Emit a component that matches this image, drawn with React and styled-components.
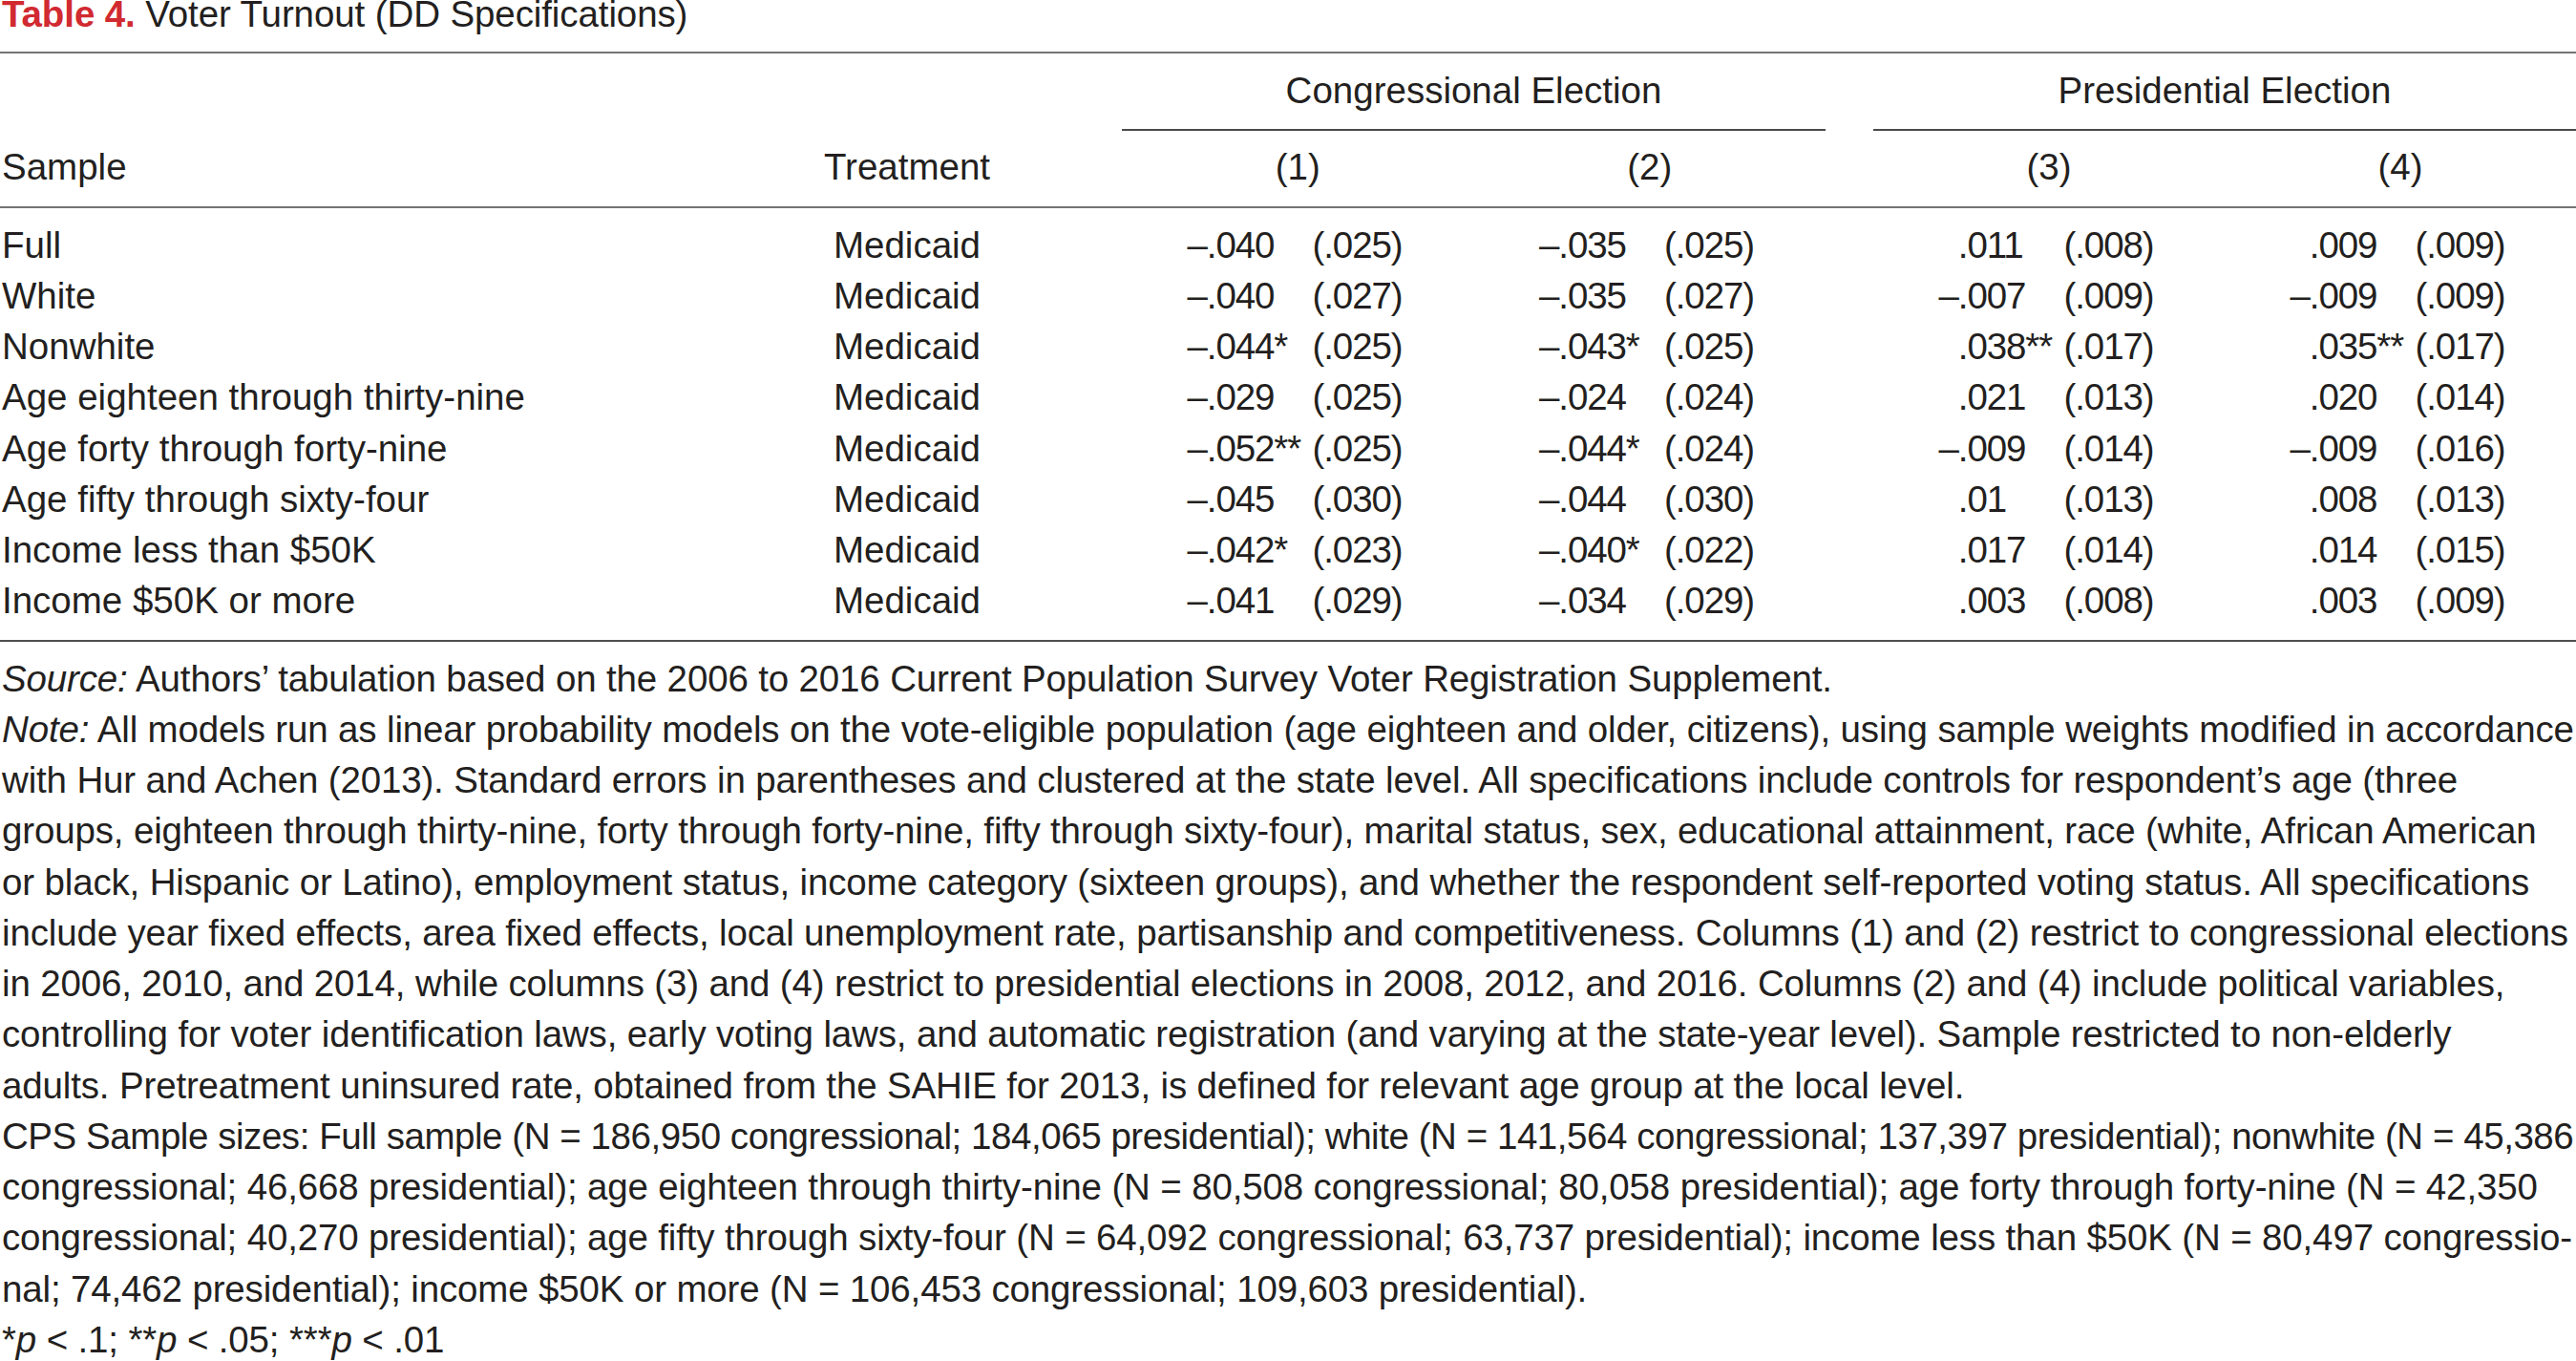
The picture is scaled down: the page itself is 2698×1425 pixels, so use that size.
import React, { useLayoutEffect, useRef, useState } from "react";
import styled, { createGlobalStyle, css } from "styled-components";

const GlobalStyle = createGlobalStyle`
  html, body {
    margin: 0;
    padding: 0;
    background: #ffffff;
    overflow: hidden;
  }
  body {
    font-family: "Liberation Sans", Arial, sans-serif;
    color: #231f20;
    font-size: 38.5px;
    line-height: 53.25px;
  }
`;

const columns = css`
  display: grid;
  grid-template-columns: 860px 180px 135px 368.5px 368.5px 50px 368px 368px;
`;

const Page = styled.div`
  width: 2698px;
`;

const Caption = styled.div`
  margin: -12px 0 12.75px;
  padding-left: 2px;
  white-space: nowrap;
  letter-spacing: -0.1px;
`;

const Label = styled.span`
  color: #d12a31;
  font-weight: 700;
`;

const TableHead = styled.div`
  ${columns};
  row-gap: 11px;
  padding: 12px 0 14px;
  border-top: 2px solid #747474;
  border-bottom: 2px solid #747474;
`;

const GroupHead = styled.div`
  grid-row: 1;
  grid-column: ${(p) => p.$col} / span 2;
  text-align: center;
  padding-bottom: 14px;
  border-bottom: 2px solid #4a4a4a;
`;

const HeadCell = styled.div`
  grid-row: 2;
  grid-column: ${(p) => p.$col};
  text-align: ${(p) => (p.$center ? "center" : "left")};
  padding-left: ${(p) => (p.$center ? "0" : "2px")};
  white-space: nowrap;
`;

const TableBody = styled.div`
  padding: 12px 0 14px;
  border-bottom: 2px solid #4f4f4f;
`;

const Row = styled.div`
  ${columns};
`;

const SampleCell = styled.div`
  grid-column: 1;
  padding-left: 2px;
  white-space: nowrap;
`;

const TreatCell = styled.div`
  grid-column: 2;
  text-align: center;
`;

const DataCell = styled.div`
  grid-column: ${(p) => p.$col};
  padding-left: 68.5px;
  white-space: nowrap;
  letter-spacing: -1.1px;
`;

const Coef = styled.span`
  display: inline-block;
  width: 131px;
  box-sizing: border-box;
  padding-left: ${(p) => (p.$neg ? "0" : "20.3px")};
`;

const SE = styled.span``;

const Notes = styled.div`
  padding: 12px 0 0 2px;
`;

const LineBox = styled.div`
  white-space: nowrap;
  letter-spacing: -0.15px;
`;

const Em = styled.i`
  font-style: italic;
`;

function Line({ children }) {
  const ref = useRef(null);
  const [spacing, setSpacing] = useState(null);
  useLayoutEffect(() => {
    const el = ref.current;
    if (!el) return;
    const over = el.scrollWidth - el.clientWidth;
    if (over > 0) {
      const chars = el.textContent.length || 1;
      setSpacing(-0.15 - (over + 3) / chars);
    }
  }, []);
  return (
    <LineBox ref={ref} style={spacing !== null ? { letterSpacing: `${spacing}px` } : undefined}>
      {children}
    </LineBox>
  );
}

const rows = [
  ["Full", ["–.040", ".025"], ["–.035", ".025"], [".011", ".008"], [".009", ".009"]],
  ["White", ["–.040", ".027"], ["–.035", ".027"], ["–.007", ".009"], ["–.009", ".009"]],
  ["Nonwhite", ["–.044*", ".025"], ["–.043*", ".025"], [".038**", ".017"], [".035**", ".017"]],
  ["Age eighteen through thirty-nine", ["–.029", ".025"], ["–.024", ".024"], [".021", ".013"], [".020", ".014"]],
  ["Age forty through forty-nine", ["–.052**", ".025"], ["–.044*", ".024"], ["–.009", ".014"], ["–.009", ".016"]],
  ["Age fifty through sixty-four", ["–.045", ".030"], ["–.044", ".030"], [".01", ".013"], [".008", ".013"]],
  ["Income less than $50K", ["–.042*", ".023"], ["–.040*", ".022"], [".017", ".014"], [".014", ".015"]],
  ["Income $50K or more", ["–.041", ".029"], ["–.034", ".029"], [".003", ".008"], [".003", ".009"]],
];

const dataCols = [4, 5, 7, 8];

const noteLines = [
  "with Hur and Achen (2013). Standard errors in parentheses and clustered at the state level. All specifications include controls for respondent’s age (three",
  "groups, eighteen through thirty-nine, forty through forty-nine, fifty through sixty-four), marital status, sex, educational attainment, race (white, African American",
  "or black, Hispanic or Latino), employment status, income category (sixteen groups), and whether the respondent self-reported voting status. All specifications",
  "include year fixed effects, area fixed effects, local unemployment rate, partisanship and competitiveness. Columns (1) and (2) restrict to congressional elections",
  "in 2006, 2010, and 2014, while columns (3) and (4) restrict to presidential elections in 2008, 2012, and 2016. Columns (2) and (4) include political variables,",
  "controlling for voter identification laws, early voting laws, and automatic registration (and varying at the state-year level). Sample restricted to non-elderly",
  "adults. Pretreatment uninsured rate, obtained from the SAHIE for 2013, is defined for relevant age group at the local level.",
];

const sizeLines = [
  "CPS Sample sizes: Full sample (N = 186,950 congressional; 184,065 presidential); white (N = 141,564 congressional; 137,397 presidential); nonwhite (N = 45,386",
  "congressional; 46,668 presidential); age eighteen through thirty-nine (N = 80,508 congressional; 80,058 presidential); age forty through forty-nine (N = 42,350",
  "congressional; 40,270 presidential); age fifty through sixty-four (N = 64,092 congressional; 63,737 presidential); income less than $50K (N = 80,497 congressio-",
  "nal; 74,462 presidential); income $50K or more (N = 106,453 congressional; 109,603 presidential).",
];

export default function App() {
  return (
    <Page>
      <GlobalStyle />
      <Caption>
        <Label>Table 4.</Label> Voter Turnout (DD Specifications)
      </Caption>

      <TableHead>
        <GroupHead $col={4}>Congressional Election</GroupHead>
        <GroupHead $col={7}>Presidential Election</GroupHead>
        <HeadCell $col={1}>Sample</HeadCell>
        <HeadCell $col={2} $center>Treatment</HeadCell>
        <HeadCell $col={4} $center>(1)</HeadCell>
        <HeadCell $col={5} $center>(2)</HeadCell>
        <HeadCell $col={7} $center>(3)</HeadCell>
        <HeadCell $col={8} $center>(4)</HeadCell>
      </TableHead>

      <TableBody>
        {rows.map(([label, ...cells]) => (
          <Row key={label}>
            <SampleCell>{label}</SampleCell>
            <TreatCell>Medicaid</TreatCell>
            {cells.map(([coef, se], i) => (
              <DataCell key={i} $col={dataCols[i]}>
                <Coef $neg={coef.startsWith("–")}>{coef}</Coef>
                <SE>({se})</SE>
              </DataCell>
            ))}
          </Row>
        ))}
      </TableBody>

      <Notes>
        <Line>
          <Em>Source:</Em> Authors’ tabulation based on the 2006 to 2016 Current Population Survey Voter Registration Supplement.
        </Line>
        <Line>
          <Em>Note:</Em> All models run as linear probability models on the vote-eligible population (age eighteen and older, citizens), using sample weights modified in accordance
        </Line>
        {noteLines.map((t) => (
          <Line key={t}>{t}</Line>
        ))}
        {sizeLines.map((t) => (
          <Line key={t}>{t}</Line>
        ))}
        <Line>
          *<Em>p</Em> &lt; .1; **<Em>p</Em> &lt; .05; ***<Em>p</Em> &lt; .01
        </Line>
      </Notes>
    </Page>
  );
}
